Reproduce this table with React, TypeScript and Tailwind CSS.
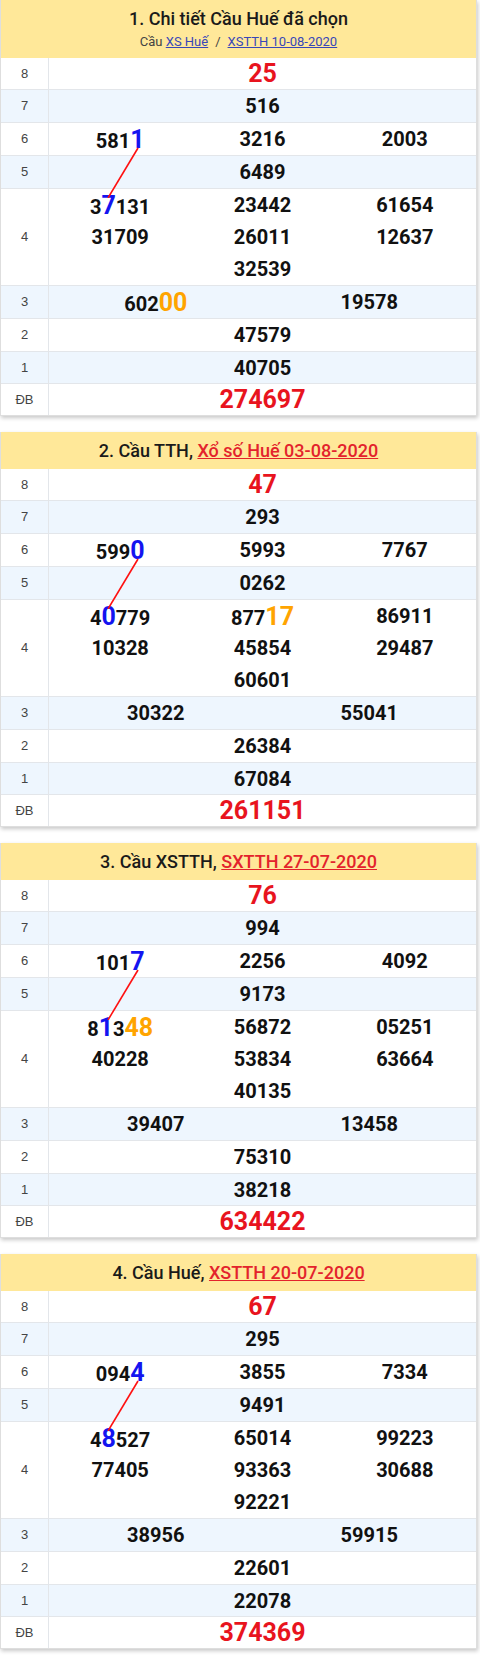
import React from "react";

// "581[1]" -> blue digit, "602{00}" -> orange digits
type Row = { label: string; items: string[]; cols: 1 | 2 | 3; big?: boolean; h: string };

type Block = {
  title: React.ReactNode;
  sub?: React.ReactNode;
  rows: Row[];
};

const labels = ["8", "7", "6", "5", "4", "3", "2", "1", "ĐB"];
const colCount: (1 | 2 | 3)[] = [1, 1, 3, 1, 3, 2, 1, 1, 1];
const heights = ["h-[32px]", "h-[33px]", "h-[33px]", "h-[33px]", "h-[97px]", "h-[33px]", "h-[33px]", "h-[32px]", "h-[31px]"];

function mkRows(d: string[][]): Row[] {
  return d.map((items, i) => ({
    label: labels[i],
    items,
    cols: colCount[i],
    big: i === 0 || i === 8,
    h: heights[i],
  }));
}

const blocks: Block[] = [
  {
    title: "1. Chi tiết Cầu Huế đã chọn",
    sub: (
      <span>
        Cầu <a className="text-[#3847b8] underline">XS Huế</a>
        <span className="mx-[7px]">/</span>
        <a className="text-[#3847b8] underline">XSTTH 10-08-2020</a>
      </span>
    ),
    rows: mkRows([
      ["25"],
      ["516"],
      ["581[1]", "3216", "2003"],
      ["6489"],
      ["3[7]131", "23442", "61654", "31709", "26011", "12637", "32539"],
      ["602{00}", "19578"],
      ["47579"],
      ["40705"],
      ["274697"],
    ]),
  },
  {
    title: (
      <span>
        2. Cầu TTH, <a className="text-[#e3232c] underline">Xổ số Huế 03-08-2020</a>
      </span>
    ),
    rows: mkRows([
      ["47"],
      ["293"],
      ["599[0]", "5993", "7767"],
      ["0262"],
      ["4[0]779", "877{17}", "86911", "10328", "45854", "29487", "60601"],
      ["30322", "55041"],
      ["26384"],
      ["67084"],
      ["261151"],
    ]),
  },
  {
    title: (
      <span>
        3. Cầu XSTTH, <a className="text-[#e3232c] underline">SXTTH 27-07-2020</a>
      </span>
    ),
    rows: mkRows([
      ["76"],
      ["994"],
      ["101[7]", "2256", "4092"],
      ["9173"],
      ["8[1]3{48}", "56872", "05251", "40228", "53834", "63664", "40135"],
      ["39407", "13458"],
      ["75310"],
      ["38218"],
      ["634422"],
    ]),
  },
  {
    title: (
      <span>
        4. Cầu Huế, <a className="text-[#e3232c] underline">XSTTH 20-07-2020</a>
      </span>
    ),
    rows: mkRows([
      ["67"],
      ["295"],
      ["094[4]", "3855", "7334"],
      ["9491"],
      ["4[8]527", "65014", "99223", "77405", "93363", "30688", "92221"],
      ["38956", "59915"],
      ["22601"],
      ["22078"],
      ["374369"],
    ]),
  },
];

function Num({ v, big }: { v: string; big?: boolean }) {
  if (big) return <span className="text-[25px] font-bold text-[#e8141e]">{v}</span>;
  const parts: React.ReactNode[] = [];
  const re = /\[(\d+)\]|\{(\d+)\}|(\d+)/g;
  let m: RegExpExecArray | null;
  let k = 0;
  while ((m = re.exec(v))) {
    if (m[1])
      parts.push(
        <span key={k++} className="text-[25px] text-[#1414f0]">
          {m[1]}
        </span>
      );
    else if (m[2])
      parts.push(
        <span key={k++} className="text-[25px] text-[#ffa400]">
          {m[2]}
        </span>
      );
    else parts.push(<span key={k++}>{m[3]}</span>);
  }
  return <span className="text-[20px] font-bold text-[#111]">{parts}</span>;
}

function TableRow({ row, idx, last }: { row: Row; idx: number; last: boolean }) {
  const w = row.cols === 3 ? "w-1/3" : row.cols === 2 ? "w-1/2" : "w-full";
  return (
    <div
      className={`flex ${row.h} ${last ? "" : "border-b border-[#e3e6ea]"} ${
        idx % 2 === 1 ? "bg-[#eef6fe]" : "bg-white"
      }`}
    >
      <div className="flex w-[48px] shrink-0 items-center justify-center border-r border-[#e3e6ea] font-['Liberation_Sans',Arial,sans-serif] text-[13px] text-[#444]">
        {row.label}
      </div>
      <div className="flex flex-1 flex-wrap content-center justify-center">
        {row.items.map((it, i) => (
          <div key={i} className={`${w} flex h-[32px] items-center justify-center leading-none`}>
            <Num v={it} big={row.big} />
          </div>
        ))}
      </div>
    </div>
  );
}

function Card({ b, first }: { b: Block; first: boolean }) {
  return (
    <div
      className={`border-x border-b border-[#dedede] bg-white shadow-[1px_2px_4px_rgba(0,0,0,0.22)] ${
        first ? "" : "mt-[16px]"
      }`}
    >
      {b.sub ? (
        <div className="flex h-[58px] flex-col items-center bg-[#ffe899] pt-[6px] text-[#1a1a1a]">
          <div className="text-[18px] font-medium leading-[26px]">{b.title}</div>
          <div className="mt-[2px] text-[13px] leading-[16px] text-[#444]">{b.sub}</div>
        </div>
      ) : (
        <div className="flex h-[37px] items-center justify-center bg-[#ffe899] text-[18px] font-medium text-[#1a1a1a]">
          {b.title}
        </div>
      )}
      <div className="relative">
        {b.rows.map((r, i) => (
          <TableRow key={i} row={r} idx={i} last={i === b.rows.length - 1} />
        ))}
        <svg className="pointer-events-none absolute left-0 top-0 h-[140px] w-[200px]" viewBox="0 0 200 140">
          <line x1="137" y1="90" x2="107" y2="140" stroke="#ff1010" strokeWidth="1.6" />
        </svg>
      </div>
    </div>
  );
}

export default function App() {
  return (
    <div className="min-h-[1655px] w-[480px] bg-white pr-[3px] font-['Roboto','Liberation_Sans',sans-serif]">
      {blocks.map((b, i) => (
        <Card key={i} b={b} first={i === 0} />
      ))}
    </div>
  );
}
